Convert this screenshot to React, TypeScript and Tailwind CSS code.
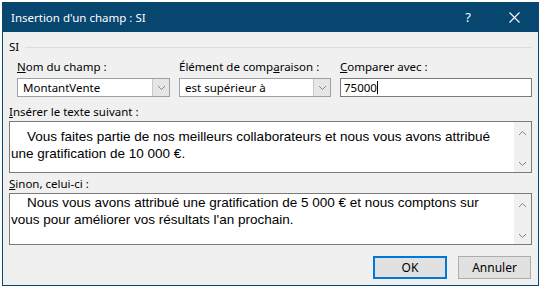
import React from 'react';

const ui = { fontFamily: '"Noto Sans", "Open Sans", sans-serif' };
const arial = { fontFamily: '"Liberation Sans", Arial, sans-serif' };

function Chevron({ up = false }: { up?: boolean }) {
  return (
    <svg width="9" height="6" viewBox="0 0 9 6" className="block">
      <path d={up ? 'M1 5 L4.5 1.5 L8 5' : 'M1 1 L4.5 4.5 L8 1'} fill="none" stroke="#858585" strokeWidth="1" />
    </svg>
  );
}

function Combo({ value, width }: { value: string; width: string }) {
  return (
    <div className={`flex h-[19px] ${width} border border-[#a0a0a0] bg-white`}>
      <div className="flex-1 flex items-center pl-[5px] text-[11.5px] text-black">{value}</div>
      <div className="w-[17px] flex items-center justify-center border-l border-[#c9c9c9] bg-[#e6e6e6]">
        <Chevron />
      </div>
    </div>
  );
}

function TextBox({ lines, top }: { lines: string[]; top: string }) {
  return (
    <div className="flex h-[52px] border border-[#7a7a7a] bg-white">
      <div className={`flex-1 pl-[1px] ${top} text-[13.5px] leading-[17px] text-black`} style={arial}>
        {lines.map((l, i) => (
          <div key={i} className={i === 0 ? 'indent-[16px] whitespace-nowrap' : 'whitespace-nowrap'}>
            {l}
          </div>
        ))}
      </div>
      <div className="w-[17px] flex flex-col items-center justify-between pt-[8px] pb-[5px] bg-[#f0f0f0]">
        <Chevron up />
        <Chevron />
      </div>
    </div>
  );
}

export default function App() {
  return (
    <div className="w-[541px] h-[288px] bg-white p-[2px]" style={ui}>
      <div className="w-[537px] h-[284px] flex flex-col border border-[#07466f] bg-[#f0f0f0]">
        {/* Title bar */}
        <div className="h-[29px] flex items-center bg-[#07466f] text-white">
          <span className="pl-[8px] text-[11.5px] flex-1">Insertion d'un champ : SI</span>
          <span className="w-[46px] text-center text-[13px]">?</span>
          <span className="w-[46px] flex justify-center mr-[1px]">
            <svg width="11" height="11" viewBox="0 0 11 11">
              <path d="M0.5 0.5 L10.5 10.5 M10.5 0.5 L0.5 10.5" stroke="white" strokeWidth="1.1" />
            </svg>
          </span>
        </div>

        <div className="flex flex-col px-[6px] text-[11.5px] text-black">
          {/* Group header */}
          <div className="flex items-center h-[14px] mt-[8px]">
            <span>SI</span>
            <div className="flex-1 h-px bg-[#dcdcdc] ml-[6px]" />
          </div>

          {/* Criteria row */}
          <div className="flex gap-[9px] pl-[8px] mt-[5px]">
            <div className="flex flex-col gap-[3px] w-[153px]">
              <span className="h-[16px] leading-[16px]"><u>N</u>om du champ :</span>
              <Combo value="MontantVente" width="w-[153px]" />
            </div>
            <div className="flex flex-col gap-[3px] w-[152px]">
              <span className="h-[16px] leading-[16px]">Élément de comp<u>a</u>raison :</span>
              <Combo value="est supérieur à" width="w-[152px]" />
            </div>
            <div className="flex flex-col gap-[3px] w-[192px]">
              <span className="h-[16px] leading-[16px]"><u>C</u>omparer avec :</span>
              <div className="h-[19px] flex items-center border border-[#7a7a7a] bg-white pl-[3px] text-[11.5px]">
                75000<span className="inline-block w-px h-[13px] bg-black" />
              </div>
            </div>
          </div>

          {/* Texte si vrai */}
          <span className="h-[16px] leading-[16px] mt-[7px]"><u>I</u>nsérer le texte suivant :</span>
          <div className="mt-[1px]">
            <TextBox
              top="pt-[6px]"
              lines={[
                'Vous faites partie de nos meilleurs collaborateurs et nous vous avons attribué',
                'une gratification de 10 000 €.',
              ]}
            />
          </div>

          {/* Texte si faux */}
          <span className="h-[16px] leading-[16px] mt-[3px]"><u>S</u>inon, celui-ci :</span>
          <div className="mt-[1px]">
            <TextBox
              top="pt-0"
              lines={[
                'Nous vous avons attribué une gratification de 5 000 € et nous comptons sur',
                "vous pour améliorer vos résultats l'an prochain.",
              ]}
            />
          </div>

          {/* Buttons */}
          <div className="flex justify-end gap-[11px] mt-[11px] pr-[1px]">
            <button className="w-[74px] h-[23px] border-2 border-[#0078d7] bg-[#e1e1e1] text-[12px]">OK</button>
            <button className="w-[73px] h-[23px] border border-[#adadad] bg-[#e1e1e1] text-[12px]">Annuler</button>
          </div>
        </div>
      </div>
    </div>
  );
}
